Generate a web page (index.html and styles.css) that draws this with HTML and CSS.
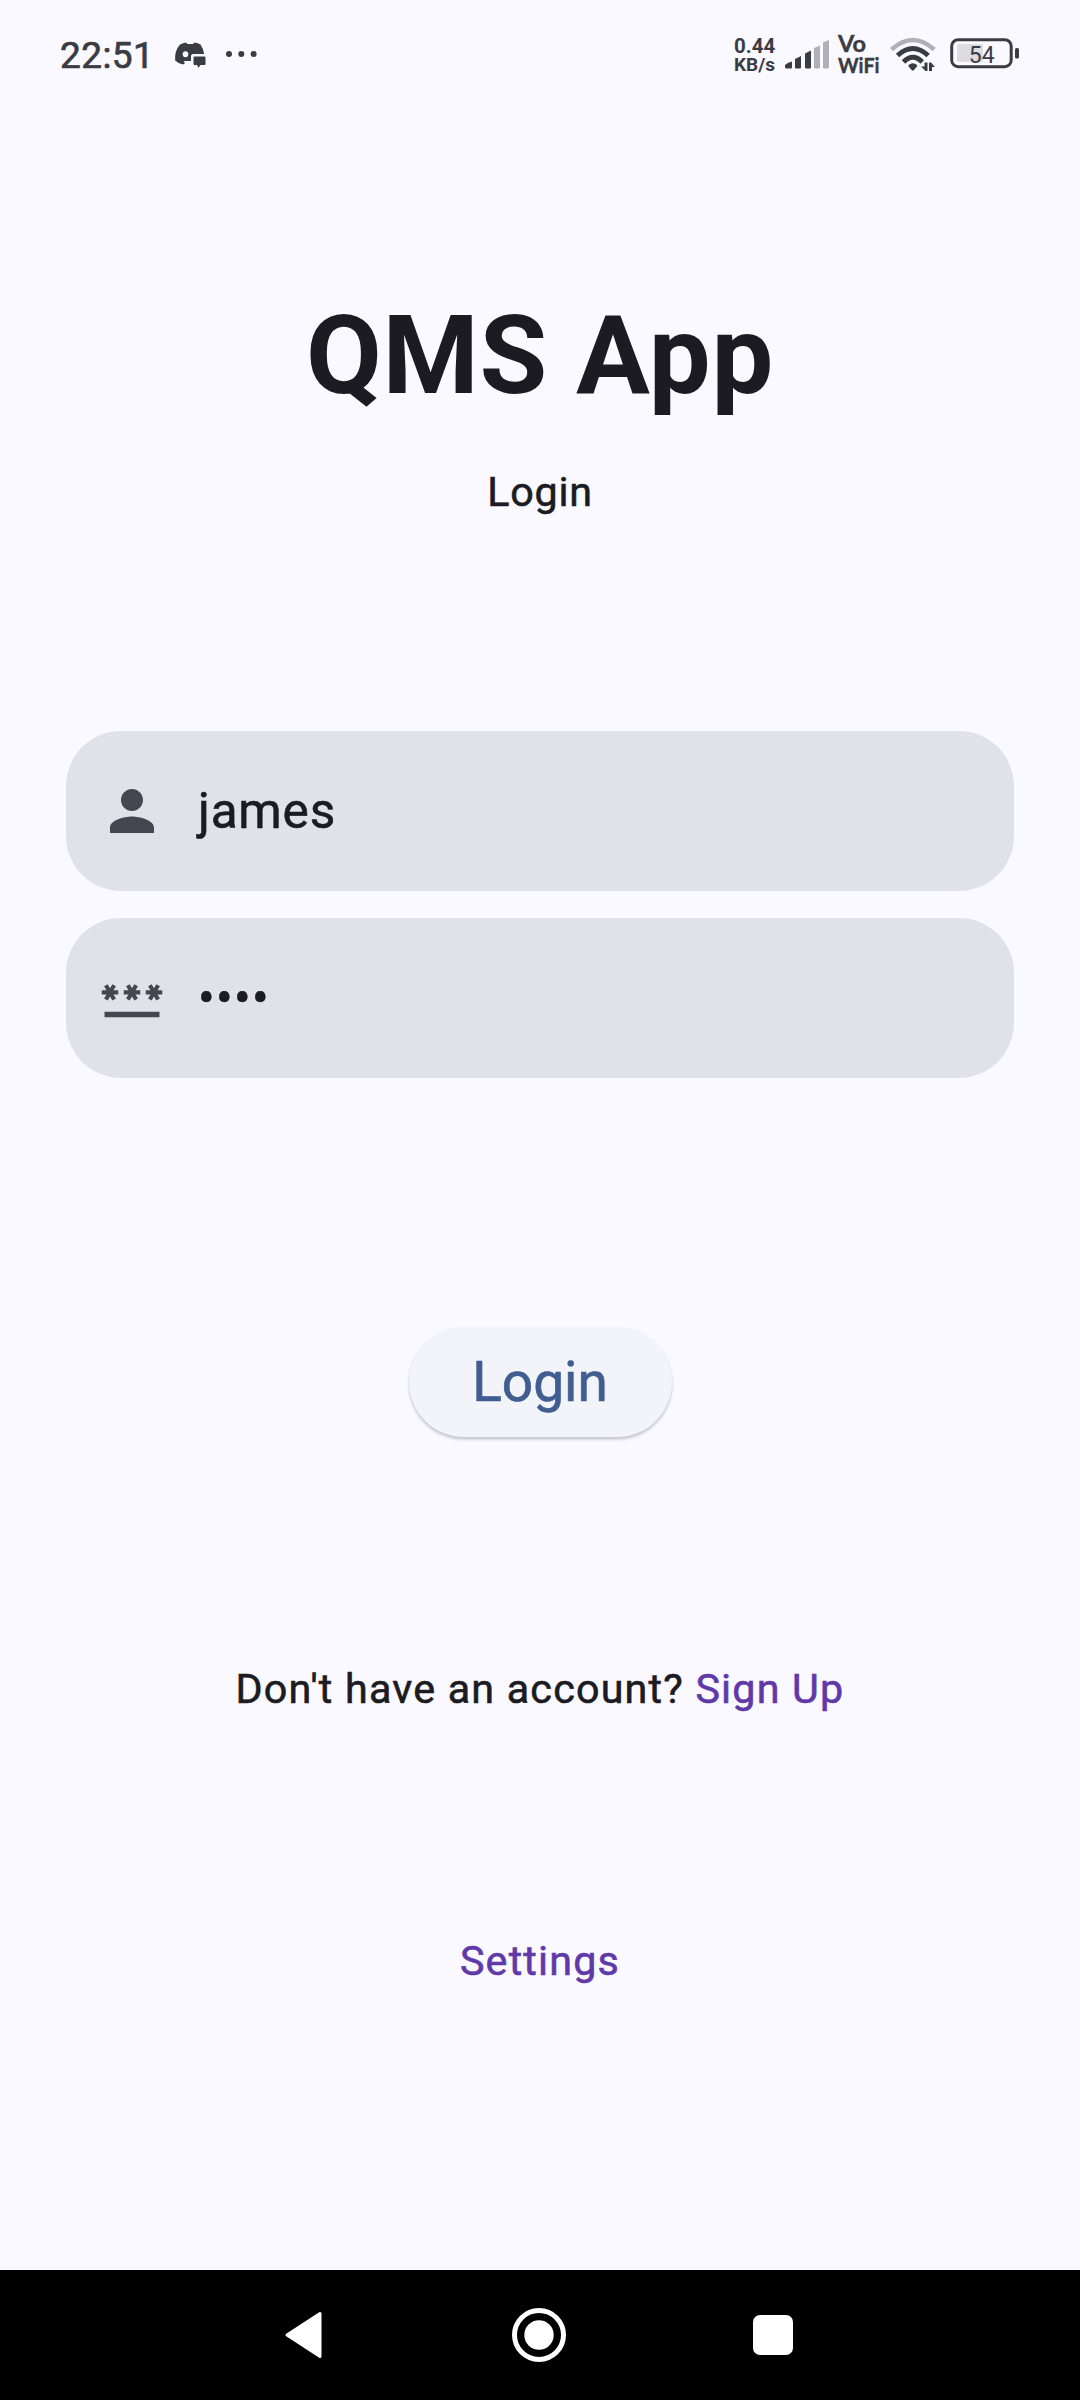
FILE: index.html
```html
<!DOCTYPE html>
<html lang="en">
<head>
<meta charset="utf-8">
<title>QMS App</title>
<link rel="stylesheet" href="styles.css">
</head>
<body>
<div class="screen">
  <header class="status">
    <div class="status-left">
      <span class="clock">22:51</span>
      <svg class="chat" width="32" height="28" viewBox="0 0 32 28">
        <path fill="#3b3b42" fill-rule="evenodd" d="M6 2.5Q9 .8 12 .5L13.5 2H19L20.500 .5Q24 1 26.500 2.500Q29.500 7 30.200 12H19Q17.500 12 17 13.500V19H9.500L11 21L9 22.500Q4 21.500 1.200 18.500Q.3 9 6 2.500ZM11.500 9.200A2.800 3 0 1 0 11.500 15.200A2.800 3 0 1 0 11.500 9.200Z"/>
        <path fill="#3b3b42" d="M20.500 14.500H30.500Q31.500 14.500 31.500 15.500V22Q31.500 23 30.500 23H26.500L24.500 25.800L23 23H20.500Q19.500 23 19.500 22V15.500Q19.500 14.500 20.500 14.500Z"/>
      </svg>
      <svg class="more" width="32" height="8" viewBox="0 0 32 8" fill="#3b3b42"><circle cx="4" cy="4" r="3"/><circle cx="16.300" cy="4" r="3"/><circle cx="28.600" cy="4" r="3"/></svg>
    </div>
    <div class="status-right">
      <div class="speed"><span class="speed-value">0.44</span><span class="speed-unit">KB/s</span></div>
      <svg class="signal" width="45" height="30" viewBox="0 0 45 30">
        <g fill="#3b3b42"><path d="M0 25Q3 22 7 21.500V27.500Q7 28.500 6 28.500H1.500Q0 28.500 0 27Z"/><path d="M10 19L16 16V27.500Q16 28.500 15 28.500H11Q10 28.500 10 27.500Z"/><path d="M20 13.500L26 10.500V27.500Q26 28.500 25 28.500H21Q20 28.500 20 27.500Z"/></g>
        <g fill="#b0b0b6"><path d="M29 8L35 5.500V27.500Q35 28.500 34 28.500H30Q29 28.500 29 27.500Z"/><path d="M38 2.500L44 0V27.500Q44 28.500 43 28.500H39Q38 28.500 38 27.500Z"/></g>
      </svg>
      <svg class="vowifi" width="46" height="48" viewBox="-1 -6 46 48"><text x="0" y="17.500" font-size="22.500" textLength="28" lengthAdjust="spacingAndGlyphs">Vo</text><text x="0" y="38.500" font-size="20.500" textLength="41.500" lengthAdjust="spacingAndGlyphs">WiFi</text></svg>
      <svg class="wifi" width="46" height="36" viewBox="0 0 46 36" fill="none" stroke="#3b3b42">
        <path stroke="#b0b0b6" stroke-width="4.500" d="M1.500 12.500Q22.800 -6.500 44.200 12.500"/>
        <path stroke-width="5" d="M7.500 18.500Q22.800 4.500 38.200 18.500"/>
        <path stroke-width="5" d="M13.500 25Q22.800 15.500 32.200 25"/>
        <path stroke="none" fill="#3b3b42" d="M18.500 28Q22.800 24.500 27.100 28Q27.500 29 26.500 30L24 33Q22.800 34 21.600 33L19 30Q18.100 29 18.500 28Z"/>
        <path stroke="none" fill="#3b3b42" d="M34.500 25.500H37.500V34H35.500L31 29.500H34.500ZM39 34V25.500H41L45 30H42V34Z"/>
      </svg>
      <svg class="battery" width="70" height="32" viewBox="0 0 70 32">
        <rect x="7" y="6" width="26" height="18" rx="2" fill="#dcdce1"/>
        <rect x="1.700" y="1.700" width="59.500" height="27" rx="6.500" fill="none" stroke="#3b3b42" stroke-width="3"/>
        <rect x="65" y="10" width="4" height="10.500" rx="1.500" fill="#3b3b42"/>
        <text x="31.800" y="24.700" font-size="23" text-anchor="middle">54</text>
      </svg>
    </div>
  </header>

  <main class="login">
    <h1 class="title">QMS App</h1>
    <p class="subtitle">Login</p>
    <form class="fields">
      <div class="field">
        <svg class="icon" viewBox="0 0 24 24"><path d="M12 12c2.210 0 4-1.790 4-4s-1.790-4-4-4-4 1.790-4 4 1.790 4 4 4zm0 2c-2.670 0-8 1.340-8 4v2h16v-2c0-2.660-5.330-4-8-4z"/></svg>
        <span class="value">james</span>
      </div>
      <div class="field">
        <svg class="icon" viewBox="0 0 24 24"><path d="M2 17h20v2H2v-2zm1.150-4.050L4 11.470l.85 1.480 1.300-.75-.85-1.480H7v-1.500H5.300l.85-1.470L4.850 7 4 8.470 3.150 7l-1.300.75.85 1.470H1v1.500h1.700l-.85 1.480 1.300.75zm6.700-.75l1.300.75.85-1.480.85 1.480 1.300-.75-.85-1.480H15v-1.500h-1.700l.85-1.470-1.300-.75L12 8.470 11.150 7l-1.300.75.85 1.470H9v1.500h1.700l-.85 1.480zM23 9.220h-1.700l.85-1.470-1.300-.75L20 8.470 19.150 7l-1.300.75.85 1.470H17v1.500h1.700l-.85 1.480 1.300.75.85-1.480.85 1.480 1.300-.75-.85-1.480H23v-1.500z"/></svg>
        <span class="value masked">••••</span>
      </div>
    </form>
    <button class="submit" type="button">Login</button>
    <p class="signup">Don't have an account? <a class="link">Sign Up</a></p>
    <a class="link settings">Settings</a>
  </main>

  <nav class="navbar">
    <svg width="40" height="48" viewBox="0 0 40 48"><path fill="#fff" stroke="#fff" stroke-width="3" stroke-linejoin="round" d="M3 24L36 2.500V45.500Z"/></svg>
    <svg width="54" height="54" viewBox="0 0 54 54"><circle cx="27" cy="27" r="24.500" fill="none" stroke="#fff" stroke-width="5"/><circle cx="27" cy="27" r="14.700" fill="#fff"/></svg>
    <svg width="40" height="40" viewBox="0 0 40 40"><rect width="40" height="40" rx="7" fill="#fff"/></svg>
  </nav>
</div>
</body>
</html>
```
FILE: styles.css
```css
* { box-sizing: border-box; }
body { margin: 0; background: #faf9ff; font-family: Roboto, sans-serif; color: #1b1b21; }
h1, p { margin: 0; }
.screen { width: 1080px; height: 2400px; display: flex; flex-direction: column; }

.status { height: 110px; display: flex; justify-content: space-between; align-items: flex-start; color: #3b3b42; }
.status-left, .status-right { display: flex; align-items: flex-start; }
.status-left { padding-left: 60px; }
.clock { width: 88px; margin-top: 34px; font-size: 37px; line-height: 43px; letter-spacing: .4px; -webkit-text-stroke: .7px; white-space: nowrap; }
.chat { margin: 42px 0 0 26px; }
.more { margin: 50px 0 0 19px; }
.status-right { padding-right: 60px; }
.speed { width: 51px; display: flex; flex-direction: column; margin-top: 36px; font-weight: 700; white-space: nowrap; }
.speed-value { font-size: 20.5px; line-height: 20px; }
.speed-unit { font-size: 19px; line-height: 18px; }
.signal { margin-top: 40px; }
.vowifi { margin: 28px 0 0 7px; fill: #3b3b42; font-family: Lato, sans-serif; font-weight: 700; stroke: #3b3b42; stroke-width: .4px; }
.wifi { margin: 37px 0 0 7px; }
.battery { margin: 38px 0 0 14px; fill: #3b3b42; -webkit-text-stroke: .4px #3b3b42; }

.login { height: 2160px; display: flex; flex-direction: column; align-items: center; }
.title { margin-top: 181px; font-size: 110px; line-height: 130px; font-weight: 700; letter-spacing: .7px; }
.subtitle { margin-top: 46px; }
.subtitle, .signup, .settings { font-size: 41.25px; line-height: 50px; letter-spacing: 1.2px; -webkit-text-stroke: .6px; white-space: nowrap; }
.subtitle { letter-spacing: .8px; }
.fields { margin-top: 213.5px; width: 948px; display: flex; flex-direction: column; gap: 27px; }
.field { height: 160px; border-radius: 55px; background: #e1e2e8; display: flex; align-items: center; padding-left: 33px; }
.icon { width: 66px; height: 66px; fill: #45464f; }
.value { margin-left: 33px; font-size: 49.5px; line-height: 60px; letter-spacing: .8px; -webkit-text-stroke: .6px; }
.masked { letter-spacing: 1.3px; }
.submit { margin-top: 249.5px; width: 263px; height: 110px; padding: 0; border: 0; border-radius: 55px; background: #f3f4fa; box-shadow: 0 3px 3px rgba(0, 0, 0, .15), 0 1px 3px rgba(0, 0, 0, .08); color: #415e91; font: 400 55px/64px Roboto, sans-serif; -webkit-text-stroke: .7px; }
.signup { margin-top: 227px; }
.link { color: #6038a8; }
.settings { margin-top: 222px; }

.navbar { height: 130px; background: #000; display: flex; align-items: center; padding-left: 284px; }
.navbar svg:nth-child(2) { margin-left: 188px; }
.navbar svg:nth-child(3) { margin-left: 187px; }
```
